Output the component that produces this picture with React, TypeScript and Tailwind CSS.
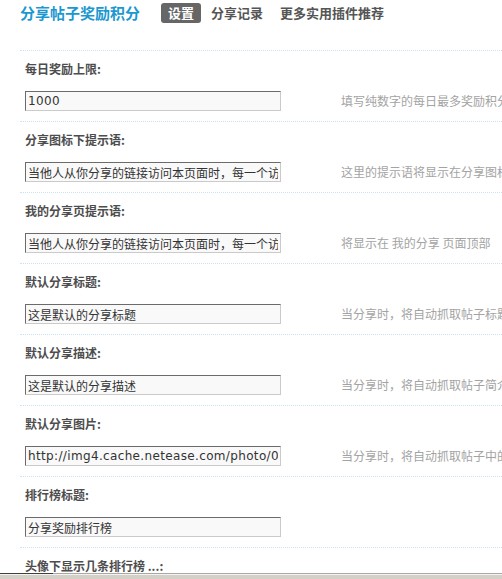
import React from "react";

type Row = { label: string; value?: string; hint?: string; latin?: boolean };

const rows: Row[] = [
  { label: "每日奖励上限:", value: "1000", hint: "填写纯数字的每日最多奖励积分，0为不限制", latin: true },
  {
    label: "分享图标下提示语:",
    value: "当他人从你分享的链接访问本页面时，每一个访问者都会为你增加积分",
    hint: "这里的提示语将显示在分享图标下方",
  },
  {
    label: "我的分享页提示语:",
    value: "当他人从你分享的链接访问本页面时，每一个访问者都会为你增加积分",
    hint: "将显示在 我的分享 页面顶部",
  },
  { label: "默认分享标题:", value: "这是默认的分享标题", hint: "当分享时，将自动抓取帖子标题，抓取失败时使用" },
  { label: "默认分享描述:", value: "这是默认的分享描述", hint: "当分享时，将自动抓取帖子简介，抓取失败时使用" },
  {
    label: "默认分享图片:",
    value: "http://img4.cache.netease.com/photo/0001/2012-01-01/share.jpg",
    hint: "当分享时，将自动抓取帖子中的图片，抓取失败时使用",
    latin: true,
  },
  { label: "排行榜标题:", value: "分享奖励排行榜" },
  { label: "头像下显示几条排行榜 ...:", value: "5" },
];

const cjk = "font-['Noto_Sans_CJK_SC',sans-serif]";

export default function App() {
  return (
    <div className={`w-[502px] h-[579px] overflow-hidden flex flex-col bg-white ${cjk}`}>
      <div className="flex-1 overflow-hidden">
        <div className="w-[700px]">
          {/* header */}
          <div className="flex items-center pl-[20px] pt-[3px] pb-[27px] h-[50px]">
            <span className="text-[15px] leading-[20px] font-bold text-[#1b98d0] whitespace-nowrap">分享帖子奖励积分</span>
            <div className="flex items-center gap-[3px] ml-[21px]">
              <span className="h-[20px] px-[7px] rounded-[3px] bg-[#666666] text-white text-[13px] leading-[20px] font-bold whitespace-nowrap">
                设置
              </span>
              <span className="h-[20px] px-[7px] text-[#555555] text-[13px] leading-[20px] font-bold whitespace-nowrap">
                分享记录
              </span>
              <span className="h-[20px] px-[7px] text-[#555555] text-[13px] leading-[20px] font-bold whitespace-nowrap">
                更多实用插件推荐
              </span>
            </div>
          </div>

          {rows.map((r, i) => (
            <div key={i} className="ml-[20px] border-t border-dotted border-[#c9e3f3] pl-[5px] pt-[8px] pb-[10px]">
              <div className="h-[20px] leading-[20px] text-[12px] font-bold text-[#4d4d4d] whitespace-nowrap">{r.label}</div>
              <div className="mt-[12px] flex items-center h-[20px]">
                <input
                  readOnly
                  value={r.value ?? ""}
                  className={
                    r.latin
                      ? "w-[256px] h-[20px] shrink-0 bg-[#f9f9f9] border border-t-[#6b6b6b] border-l-[#6b6b6b] border-b-[#cacaca] border-r-[#cacaca] px-[2px] text-[12px] leading-[18px] tracking-[0.35px] text-[#333333] font-['DejaVu_Sans','Noto_Sans_CJK_SC',sans-serif] outline-none"
                      : "w-[256px] h-[20px] shrink-0 bg-[#f9f9f9] border border-t-[#6b6b6b] border-l-[#6b6b6b] border-b-[#cacaca] border-r-[#cacaca] px-[2px] text-[12px] leading-[18px] text-[#333333] font-['DejaVu_Sans','Noto_Sans_CJK_SC',sans-serif] outline-none"
                  }
                />
                {r.hint && (
                  <span className="ml-[60px] text-[12px] leading-[20px] text-[#a3a3a3] whitespace-nowrap">{r.hint}</span>
                )}
              </div>
            </div>
          ))}
        </div>
      </div>
      {/* bottom scrollbar edge */}
      <div className="h-[6px] shrink-0 flex flex-col">
        <div className="h-[1px] flex">
          <div className="w-[53px] bg-[#404040]" />
          <div className="flex-1 bg-[#a8a8a8]" />
        </div>
        <div className="h-[1px] bg-[#f4f2ee]" />
        <div className="flex-1 bg-[#d4d0c8]" />
      </div>
    </div>
  );
}
